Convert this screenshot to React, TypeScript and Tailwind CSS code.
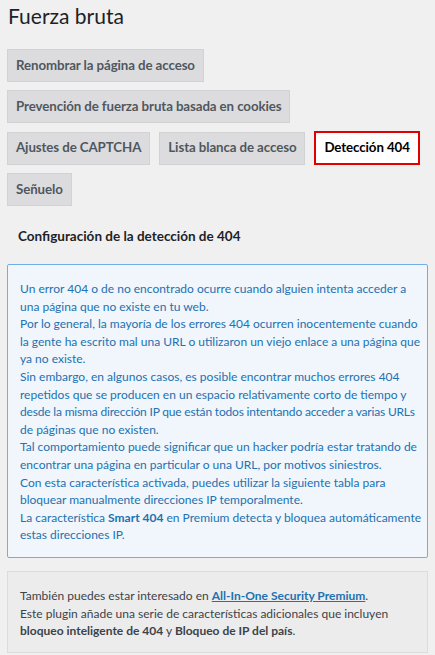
const font = { fontFamily: 'Lato, "Noto Sans", sans-serif' };

function Tab({ label, active }: { label: string; active?: boolean }) {
  if (active) {
    return (
      <div className="flex h-[34px] items-center whitespace-nowrap border-2 border-[#e00000] bg-white px-[8px] text-[13.3px] font-bold tracking-[-0.1px] text-black">
        {label}
      </div>
    );
  }
  return (
    <div className="flex h-[33px] items-center whitespace-nowrap border border-[#d2d2d4] bg-[#dcdcde] px-[8px] text-[13.3px] font-bold tracking-[-0.1px] text-[#50575e]">
      {label}
    </div>
  );
}

export default function App() {
  return (
    <div className="min-h-[655px] w-[435px] bg-[#f0f0f1] px-[7px] pt-[2px]" style={font}>
      <h1 className="pl-px text-[21px] leading-[28px] text-[#1d2327]">Fuerza bruta</h1>

      <div className="mt-[19px] flex flex-col items-start gap-[8px]">
        <Tab label="Renombrar la página de acceso" />
        <Tab label="Prevención de fuerza bruta basada en cookies" />
        <div className="flex items-center gap-[9px]">
          <Tab label="Ajustes de CAPTCHA" />
          <Tab label="Lista blanca de acceso" />
          <Tab label="Detección 404" active />
        </div>
        <Tab label="Señuelo" />
      </div>

      <h2 className="mt-[20px] pl-[11px] text-[13.5px] font-bold leading-[20px] text-[#1d2327]">
        Configuración de la detección de 404
      </h2>

      <div className="mt-[18px] rounded-[2px] border border-[#72aee6] bg-[#f0f6fc] pb-[13px] pl-[12px] pr-0 pt-[15px] text-[12px] leading-[17.6px] text-[#2271b1]">
        <p>Un error 404 o de no encontrado ocurre cuando alguien intenta acceder a una página que no existe en tu web.</p>
        <p>Por lo general, la mayoría de los errores 404 ocurren inocentemente cuando la gente ha escrito mal una URL o utilizaron un viejo enlace a una página que ya no existe.</p>
        <p>
          Sin embargo, en algunos casos, es posible encontrar muchos errores 404 repetidos que se producen en un espacio relativamente corto de tiempo y{' '}
          <span className="whitespace-nowrap tracking-[-0.18px]">desde la misma dirección IP que están todos intentando acceder a varias URLs</span>{' '}
          de páginas que no existen.
        </p>
        <p>Tal comportamiento puede significar que un hacker podría estar tratando de encontrar una página en particular o una URL, por motivos siniestros.</p>
        <p>Con esta característica activada, puedes utilizar la siguiente tabla para bloquear manualmente direcciones IP temporalmente.</p>
        <p>
          La característica <strong className="font-bold">Smart 404</strong> en Premium detecta y bloquea automáticamente estas direcciones IP.
        </p>
      </div>

      <div className="mt-[13px] border border-[#dcdcde] bg-[#ececec] pb-[12px] pl-[12px] pr-[4px] pt-[15px] text-[12px] leading-[17.6px] text-[#3c434a]">
        <p>
          También puedes estar interesado en{' '}
          <a href="#" className="font-bold text-[#2271b1] underline">All-In-One Security Premium</a>.
        </p>
        <p>
          Este plugin añade una serie de características adicionales que incluyen{' '}
          <strong className="font-bold">bloqueo inteligente de 404</strong> y{' '}
          <strong className="font-bold">Bloqueo de IP del país</strong>.
        </p>
      </div>
    </div>
  );
}
